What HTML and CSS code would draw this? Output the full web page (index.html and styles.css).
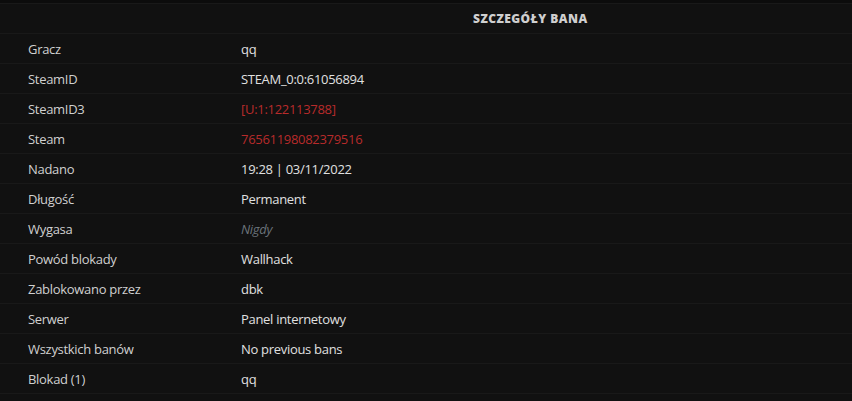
FILE: index.html
```html
<!DOCTYPE html>
<html lang="pl">
<head>
<meta charset="utf-8">
<link rel="stylesheet" href="styles.css">
</head>
<body>
<div class="topband"></div>
<table class="details">
  <thead>
    <tr><th class="empty"></th><th class="title">SZCZEGÓŁY BANA</th></tr>
  </thead>
  <tbody>
    <tr><td class="label">Gracz</td><td class="value">qq</td></tr>
    <tr><td class="label">SteamID</td><td class="value">STEAM_0:0:61056894</td></tr>
    <tr><td class="label">SteamID3</td><td class="value red">[U:1:122113788]</td></tr>
    <tr><td class="label">Steam</td><td class="value red">76561198082379516</td></tr>
    <tr><td class="label">Nadano</td><td class="value">19:28 | 03/11/2022</td></tr>
    <tr><td class="label">Długość</td><td class="value">Permanent</td></tr>
    <tr><td class="label">Wygasa</td><td class="value muted">Nigdy</td></tr>
    <tr><td class="label">Powód blokady</td><td class="value">Wallhack</td></tr>
    <tr><td class="label">Zablokowano przez</td><td class="value">dbk</td></tr>
    <tr><td class="label">Serwer</td><td class="value">Panel internetowy</td></tr>
    <tr><td class="label">Wszystkich banów</td><td class="value">No previous bans</td></tr>
    <tr><td class="label">Blokad (1)</td><td class="value">qq</td></tr>
  </tbody>
</table>
</body>
</html>
```
FILE: styles.css
```css
html, body {
  margin: 0;
  padding: 0;
  background: #111111;
  font-family: "Open Sans", "Noto Sans", sans-serif;
  font-size: 13px;
  letter-spacing: -0.3px;
  color: #d4d4d4;
}
.topband {
  height: 3px;
  background: #0c0c0c;
  border-bottom: 1px solid #191919;
}
.details {
  width: 100%;
  border-collapse: collapse;
}
.details th, .details td {
  height: 29px;
  padding: 0;
  vertical-align: middle;
  border-bottom: 1px solid #191919;
}
.details th.empty {
  width: 241px;
}
.details th.title {
  text-align: left;
  padding-left: 232px;
  font-size: 12px;
  font-weight: 800;
  letter-spacing: 0.45px;
  color: #cfcfcf;
}
.label {
  padding-left: 28px !important;
  width: 213px;
  color: #d0d0d0;
}
.value {
  color: #e0e0e0;
}
.value.red {
  color: #b82b2b;
}
.value.muted {
  color: #6b737b;
  font-style: italic;
}
```
